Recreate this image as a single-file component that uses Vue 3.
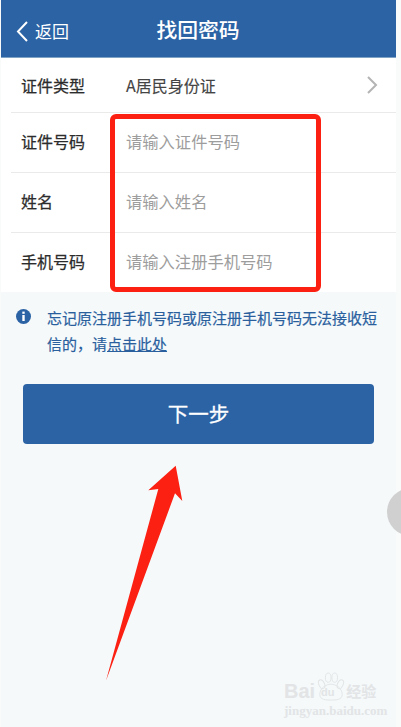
<script setup>
const rows = [
  { label: '证件号码', placeholder: '请输入证件号码', height: 60 },
  { label: '姓名', placeholder: '请输入姓名', height: 60 },
  { label: '手机号码', placeholder: '请输入注册手机号码', height: 59 },
]
</script>

<template>
  <div class="screen">
    <div class="page">
      <header class="topbar">
        <div class="back">
          <svg width="14" height="24" viewBox="0 0 14 24">
            <path d="M12 3 L3 12.5 L12 22" fill="none" stroke="#fff" stroke-width="2" />
          </svg>
          <span>返回</span>
        </div>
        <h1>找回密码</h1>
      </header>

      <section class="form">
        <div class="row type-row">
          <span class="label">证件类型</span>
          <span class="value">A居民身份证</span>
          <svg class="chevron" width="12" height="20" viewBox="0 0 12 20">
            <path d="M2 2 L10 10 L2 18" fill="none" stroke="#b4b4b4" stroke-width="2" />
          </svg>
        </div>
        <div v-for="row in rows" :key="row.label" class="row input-row" :style="{ height: row.height + 'px' }">
          <span class="label">{{ row.label }}</span>
          <span class="placeholder">{{ row.placeholder }}</span>
        </div>
      </section>

      <section class="notice">
        <svg class="info" width="15" height="15" viewBox="0 0 15 15">
          <circle cx="7.5" cy="7.5" r="7.5" fill="#2b63a5" />
          <rect x="6.3" y="2.6" width="2.4" height="2.2" fill="#fff" />
          <rect x="6.3" y="6" width="2.4" height="6" fill="#fff" />
        </svg>
        <p>忘记原注册手机号码或原注册手机号码无法接收短信的，请<u>点击此处</u></p>
      </section>

      <button class="next">下一步</button>
    </div>

    <!-- annotations drawn over the screenshot -->
    <div class="red-box"></div>
    <svg class="arrow" width="401" height="727" viewBox="0 0 401 727">
      <polygon points="175.7,465.7 148.3,490.3 158.3,489 106,680.7 175,493.3 182.3,501" fill="#fb2012" />
    </svg>
    <div class="float-ball"></div>

    <div class="watermark">
      <div class="wm-top">
        <span class="wm-bai">Bai</span>
        <svg class="wm-paw" width="28" height="30" viewBox="0 0 30 32">
          <g fill="none" stroke="#e2e4e6" stroke-width="1">
            <ellipse cx="5" cy="13" rx="3" ry="5" transform="rotate(-25 5 13)" />
            <ellipse cx="12" cy="6" rx="3" ry="5" />
            <ellipse cx="19" cy="6" rx="3" ry="5" />
            <ellipse cx="25" cy="13" rx="3" ry="5" transform="rotate(25 25 13)" />
            <path d="M3 24 C3 17 10 13 15 13 C20 13 27 17 27 24 C27 30 20 30 15 30 C10 30 3 30 3 24 Z" />
          </g>
        </svg>
        <span class="wm-du">du</span>
        <span class="wm-cn">经验</span>
      </div>
      <div class="wm-url">jingyan.baidu.com</div>
    </div>
  </div>
</template>

<style>
html, body {
  margin: 0;
  background: #fff;
}
</style>

<style scoped>
.screen {
  position: relative;
  width: 401px;
  height: 727px;
  overflow: hidden;
  background: #f9fafa;
  font-family: "Noto Sans CJK SC", "Liberation Sans", sans-serif;
}

.page {
  margin-left: 1px;
  width: 395px;
  height: 727px;
  background: #f5f9fa;
}

.topbar {
  position: relative;
  display: flex;
  align-items: center;
  justify-content: center;
  height: 58px;
  background: #2b63a5;
  border-bottom: 1px solid #7ea3c4;
  box-sizing: border-box;
  color: #fff;
}

.topbar h1 {
  margin: 0 0 0 -1px;
  font-size: 20.8px;
  font-weight: 500;
}

.back {
  position: absolute;
  left: 14px;
  top: 19px;
  display: flex;
  align-items: center;
  gap: 6px;
  font-size: 17px;
  line-height: 24px;
}

.form {
  background: #fff;
}

.row {
  display: flex;
  align-items: center;
  margin-left: 10px;
  padding: 0 18px 0 10px;
  border-bottom: 1px solid #eaeaea;
  box-sizing: border-box;
  font-size: 16px;
}

.input-row {
  padding-bottom: 3px;
}

.row:last-child {
  border-bottom: none;
}

.type-row {
  height: 55px;
}

.label {
  width: 105px;
  flex: none;
  color: #2c2c2c;
  -webkit-text-stroke: 0.25px #2c2c2c;
}

.value {
  flex: 1;
  color: #444;
  -webkit-text-stroke: 0.15px #444;
}

.placeholder {
  font-size: 16.3px;
  color: #9d9d9d;
}

.chevron {
  flex: none;
}

.notice {
  display: flex;
  padding: 13px 15px 0 15px;
}

.info {
  flex: none;
  margin-top: 4px;
}

.notice p {
  margin: 0 0 0 16px;
  font-size: 15px;
  line-height: 25.5px;
  color: #2a5f9e;
  -webkit-text-stroke: 0.2px #2a5f9e;
}

.next {
  display: block;
  margin: 28px 0 0 22px;
  width: 351px;
  height: 60px;
  padding: 0 0 2px;
  border: none;
  border-radius: 4px;
  background: #2b63a5;
  color: #fff;
  font-family: inherit;
  font-size: 20.5px;
  -webkit-text-stroke: 0.3px #fff;
}

.red-box {
  position: absolute;
  left: 110px;
  top: 114px;
  width: 211px;
  height: 178px;
  box-sizing: border-box;
  border: 5px solid #fb2012;
  border-radius: 6px;
}

.arrow {
  position: absolute;
  left: 0;
  top: 0;
}

.float-ball {
  position: absolute;
  left: 387px;
  top: 488px;
  width: 48px;
  height: 48px;
  border-radius: 50%;
  background: #d0d0d0;
}

.watermark {
  position: absolute;
  left: 284px;
  top: 672px;
  width: 110px;
  color: #e2e4e6;
}

.wm-top {
  position: relative;
  display: flex;
  align-items: flex-end;
  height: 30px;
}

.wm-bai {
  font-family: "Liberation Sans", sans-serif;
  font-size: 20px;
  font-weight: 700;
  line-height: 22px;
}

.wm-paw {
  margin: 0 1px 0 2px;
}

.wm-du {
  position: absolute;
  left: 37px;
  top: 14px;
  font-family: "Liberation Sans", sans-serif;
  font-size: 11px;
  font-weight: 700;
}

.wm-cn {
  font-size: 15px;
  line-height: 22px;
  font-weight: 700;
}

.wm-url {
  font-family: "Liberation Serif", serif;
  font-size: 13px;
  font-weight: 700;
  white-space: nowrap;
  margin-top: 1px;
}
</style>
